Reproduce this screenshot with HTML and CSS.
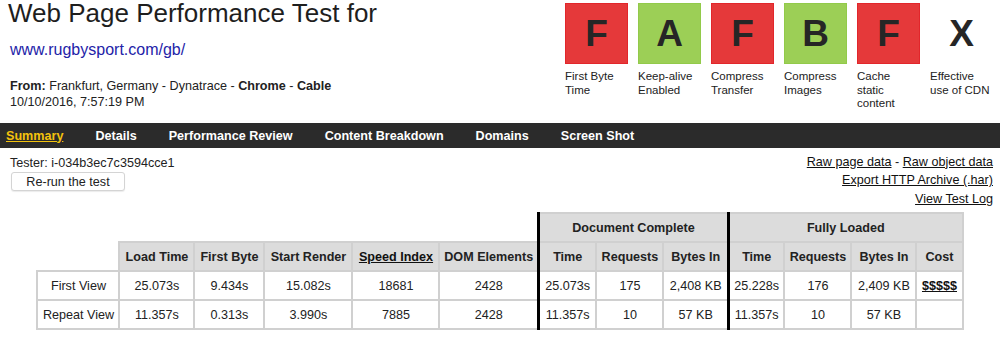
FILE: index.html
```html
<!DOCTYPE html>
<html lang="en">
<head>
  <meta charset="UTF-8" />
  <meta name="viewport" content="width=device-width, initial-scale=1.0"/>
  <title>Web Page Performance Test</title>
  <link rel="stylesheet" href="styles.css">
</head>
<body>
  <header class="top">
    <div class="test-info">
      <h1>Web Page Performance Test for</h1>
      <a class="url" href="#">www.rugbysport.com/gb/</a>
      <p class="from"><b>From:</b> Frankfurt, Germany - Dynatrace - <b>Chrome</b> - <b>Cable</b></p>
      <p class="date">10/10/2016, 7:57:19 PM</p>
    </div>

    <ul class="grades">
      <li class="grade">
        <span class="score fail">F</span>
        <span class="label">First Byte Time</span>
      </li>
      <li class="grade">
        <span class="score pass">A</span>
        <span class="label">Keep-alive Enabled</span>
      </li>
      <li class="grade">
        <span class="score fail">F</span>
        <span class="label">Compress Transfer</span>
      </li>
      <li class="grade">
        <span class="score pass">B</span>
        <span class="label">Compress Images</span>
      </li>
      <li class="grade">
        <span class="score fail">F</span>
        <span class="label">Cache static content</span>
      </li>
      <li class="grade">
        <span class="score">X</span>
        <span class="label">Effective use of CDN</span>
      </li>
    </ul>
  </header>

  <nav class="tabs">
    <a href="#" class="active">Summary</a>
    <a href="#">Details</a>
    <a href="#">Performance Review</a>
    <a href="#">Content Breakdown</a>
    <a href="#">Domains</a>
    <a href="#">Screen Shot</a>
  </nav>

  <div class="test-bar">
    <div class="tester-box">
      <p class="tester">Tester: i-034b3ec7c3594cce1</p>
      <button class="rerun">Re-run the test</button>
    </div>
    <div class="links">
      <a href="#">Raw page data</a> - <a href="#">Raw object data</a><br>
      <a href="#">Export HTTP Archive (.har)</a><br>
      <a href="#">View Test Log</a>
    </div>
  </div>

  <table class="results">
    <colgroup>
      <col style="width:82px"><col style="width:75px"><col style="width:70px"><col style="width:88px">
      <col style="width:87px"><col style="width:99px"><col style="width:58px"><col style="width:67px">
      <col style="width:65px"><col style="width:56px"><col style="width:67px"><col style="width:65px">
      <col style="width:46px">
    </colgroup>
    <tr>
      <th class="blank" colspan="6"></th>
      <th class="sep" colspan="3">Document Complete</th>
      <th class="sep" colspan="4">Fully Loaded</th>
    </tr>
    <tr>
      <th class="blank"></th>
      <th>Load Time</th>
      <th>First Byte</th>
      <th>Start Render</th>
      <th><a href="#">Speed Index</a></th>
      <th>DOM Elements</th>
      <th class="sep">Time</th>
      <th>Requests</th>
      <th>Bytes In</th>
      <th class="sep">Time</th>
      <th>Requests</th>
      <th>Bytes In</th>
      <th>Cost</th>
    </tr>
    <tr>
      <td>First View</td>
      <td>25.073s</td>
      <td>9.434s</td>
      <td>15.082s</td>
      <td>18681</td>
      <td>2428</td>
      <td class="sep">25.073s</td>
      <td>175</td>
      <td>2,408 KB</td>
      <td class="sep">25.228s</td>
      <td>176</td>
      <td>2,409 KB</td>
      <td><a href="#" class="cost">$$$$$</a></td>
    </tr>
    <tr>
      <td>Repeat View</td>
      <td>11.357s</td>
      <td>0.313s</td>
      <td>3.990s</td>
      <td>7885</td>
      <td>2428</td>
      <td class="sep">11.357s</td>
      <td>10</td>
      <td>57 KB</td>
      <td class="sep">11.357s</td>
      <td>10</td>
      <td>57 KB</td>
      <td></td>
    </tr>
  </table>
</body>
</html>
```

FILE: styles.css
```css
* {
  box-sizing: border-box;
}

body {
  margin: 0;
  font-family: "Liberation Sans", Arial, sans-serif;
  font-size: 12.6px;
  color: #222;
  background-color: #fff;
}

.top {
  display: flex;
  justify-content: space-between;
  padding: 0 7px 0 10px;
}

.test-info h1 {
  margin: 0 0 0 -2px;
  font-size: 26px;
  font-weight: normal;
  line-height: 26px;
  color: #1e1e1e;
}

.url {
  display: block;
  margin-top: 14px;
  font-size: 16px;
  line-height: 20px;
  color: #2323a8;
  text-decoration: none;
}

.from {
  margin: 18px 0 0;
  line-height: 16px;
}

.date {
  margin: 0;
  line-height: 16px;
}

.grades {
  display: flex;
  gap: 10px;
  list-style: none;
  margin: 0;
  padding: 3px 0 0;
}

.grade {
  width: 63px;
}

.score {
  display: flex;
  align-items: center;
  justify-content: center;
  height: 61px;
  font-size: 37px;
  font-weight: bold;
  color: #262626;
  border: 1px solid transparent;
}

.score.fail {
  background-color: #e5393a;
  border-color: #e2262b;
}

.score.pass {
  background-color: #9ccf56;
  border-color: #92ca4a;
}

.label {
  display: block;
  margin-top: 6px;
  font-size: 11.5px;
  line-height: 13.5px;
  color: #222;
}

.tabs {
  display: flex;
  align-items: center;
  gap: 32px;
  height: 25px;
  margin-top: 12.5px;
  padding-left: 6px;
  background-color: #2b2b2b;
}

.tabs a {
  color: #fff;
  font-weight: bold;
  text-decoration: none;
}

.tabs a.active {
  color: #f4c20d;
  text-decoration: underline;
}

.test-bar {
  display: flex;
  justify-content: space-between;
  margin-top: 4.5px;
  padding: 0 7px 0 10px;
}

.tester {
  margin: 0;
  padding-top: 2px;
  line-height: 16px;
}

.rerun {
  display: block;
  width: 114px;
  height: 19px;
  margin: 1.5px 0 0 1px;
  padding: 0;
  font-family: inherit;
  font-size: 12.6px;
  color: #222;
  background-color: #fff;
  border: 1px solid #d4d4d4;
  border-radius: 3px;
  box-shadow: 0 1px 1px rgba(0,0,0,0.08);
}

.links {
  text-align: right;
  line-height: 18.5px;
}

.links a {
  color: #111;
}

.results {
  width: 925px;
  margin: 4px auto 0;
  border-collapse: collapse;
  table-layout: fixed;
}

.results th,
.results td {
  height: 29px;
  padding: 0;
  text-align: center;
  font-size: 12.6px;
  border: 2px solid #d0d0d0;
}

.results th {
  font-weight: bold;
  background-color: #dcdcdc;
}

.results th a,
.results td a {
  color: #111;
}

.results .blank {
  background-color: #fff;
  border: none;
}

.results .sep {
  border-left: 3px solid #000;
}

.cost {
  font-weight: bold;
}
```
